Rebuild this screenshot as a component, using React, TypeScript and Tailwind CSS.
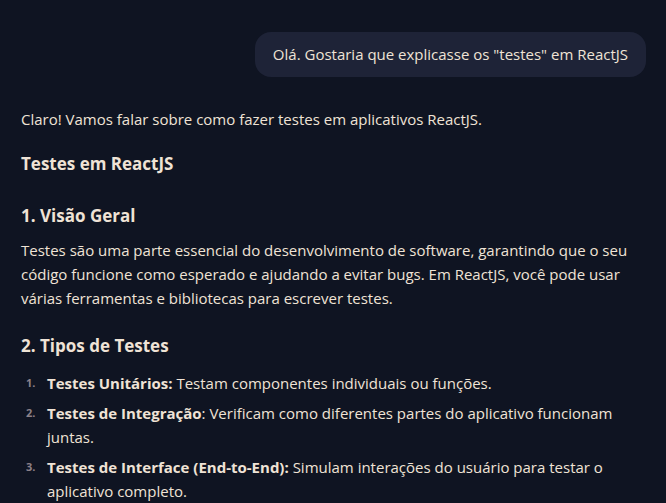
export default function App() {
  return (
    <div className="min-h-screen bg-[#0f1422] text-[#efe3d6] font-['Open_Sans','Liberation_Sans',sans-serif] overflow-hidden">
      <div className="px-5 pt-8">
        {/* User message */}
        <div className="flex justify-end">
          <div className="bg-[#1e2337] rounded-2xl px-[18px] py-[12px] text-[15px] leading-[21px]">
            Olá. Gostaria que explicasse os "testes" em ReactJS
          </div>
        </div>

        {/* Assistant reply */}
        <div className="mt-[30px] pl-px text-[15px] leading-[24px]">
          <p>Claro! Vamos falar sobre como fazer testes em aplicativos ReactJS.</p>

          <h3 className="mt-[21px] text-[17px] font-bold">Testes em ReactJS</h3>

          <h3 className="mt-[28px] text-[17px] font-bold">1. Visão Geral</h3>
          <p className="mt-[10px]">
            Testes são uma parte essencial do desenvolvimento de software, garantindo que o seu código funcione como
            esperado e ajudando a evitar bugs. Em ReactJS, você pode usar várias ferramentas e bibliotecas para
            escrever testes.
          </p>

          <h3 className="mt-[24px] text-[17px] font-bold">2. Tipos de Testes</h3>
          <ol className="mt-[13px] flex flex-col gap-[6px]">
            {[
              ['Testes Unitários:', ' Testam componentes individuais ou funções.'],
              ['Testes de Integração', ': Verificam como diferentes partes do aplicativo funcionam juntas.'],
              ['Testes de Interface (End-to-End):', ' Simulam interações do usuário para testar o aplicativo completo.'],
            ].map(([b, t], i) => (
              <li key={i} className="flex">
                <span className="w-[26px] shrink-0 pl-[5px] text-[11px] font-bold text-[#8c8088]">{i + 1}.</span>
                <span>
                  <strong className="font-bold">{b}</strong>
                  {t}
                </span>
              </li>
            ))}
          </ol>
        </div>
      </div>
    </div>
  );
}
